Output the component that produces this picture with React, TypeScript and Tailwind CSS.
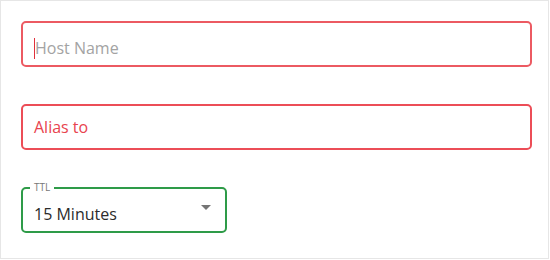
export default function App() {
  return (
    <div
      className="h-[259px] w-[549px] border border-[#e6e6e6] bg-white px-5 pt-5"
      style={{ fontFamily: '"Open Sans", sans-serif' }}
    >
      <div className="flex h-[46px] w-[511px] items-center rounded-[5px] border-2 border-[#ec5a62] pl-[11px] pt-[8px]">
        <span className="h-[21px] w-px bg-[#e0303c]" />
        <span className="text-[16px] text-[#a3a3a3]">Host Name</span>
      </div>

      <div className="mt-[37px] flex h-[46px] w-[511px] items-center rounded-[5px] border-2 border-[#ec4d57] pl-[11px]">
        <span className="text-[16px] text-[#e8434e]">Alias to</span>
      </div>

      <div className="relative mt-[37px] flex h-[46px] w-[206px] items-center justify-between rounded-[5px] border-2 border-[#2e9b48] pl-[11px] pr-[14px] pt-[8px]">
        <span className="absolute -top-[9px] left-[7px] bg-white px-[4px] text-[10px] leading-[14px] text-[#777]">TTL</span>
        <span className="text-[16px] text-[#2b2b2b]">15 Minutes</span>
        <svg width="10" height="5" viewBox="0 0 10 5" className="-mt-[14px]">
          <path d="M0 0h10L5 5z" fill="#757575" />
        </svg>
      </div>
    </div>
  );
}
